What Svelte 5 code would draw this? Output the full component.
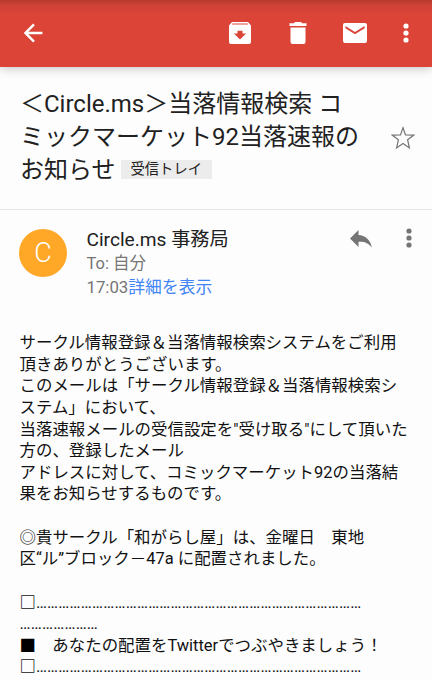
<script lang="ts">
	const subject = ["＜Circle.ms＞当落情報検索 コ", "ミックマーケット92当落速報の", "お知らせ"];

	const sender = {
		initial: "C",
		name: "Circle.ms 事務局",
		to: "To: 自分",
		time: "17:03"
	};

	const rule = "…".repeat(29);

	// already wrapped to the width of the message pane
	const lines = [
		"サークル情報登録＆当落情報検索システムをご利用",
		"頂きありがとうございます。",
		"このメールは「サークル情報登録＆当落情報検索シ",
		"ステム」において、",
		"当落速報メールの受信設定を\"受け取る\"にして頂いた",
		"方の、登録したメール",
		"アドレスに対して、コミックマーケット92の当落結",
		"果をお知らせするものです。",
		"",
		"◎貴サークル「和がらし屋」は、金曜日　東地",
		"区“ル”ブロック－47a に配置されました。",
		"",
		"□" + rule,
		"…".repeat(7),
		"■　あなたの配置をTwitterでつぶやきましょう！",
		"□" + rule
	];

	// splits the dotted rules and the box marks from ordinary text
	function split(line: string) {
		return line.match(/…+|[□■]|[^…□■]+/g) ?? [];
	}
</script>

<div class="screen">
	<header>
		<svg class="back" viewBox="0 0 24 24" width="28" height="28"><path d="M19.2 12H5M12 4.6 4.7 12l7.3 7.4" /></svg>
		<div class="actions">
			<svg viewBox="0 0 22 22" width="22" height="22">
				<path fill-rule="evenodd" d="M3 0h16l3 3.500V20a2 2 0 0 1-2 2H2a2 2 0 0 1-2-2V3.500zM3.300 1.500 2.900 2.500h16.200l-.4-1zM8.500 8.800v2.700H5l6 6 6-6h-3.500V8.800z" />
			</svg>
			<svg viewBox="0 0 18 22" width="18" height="22">
				<path d="M1.500 5.500h15V20a2 2 0 0 1-2 2h-11a2 2 0 0 1-2-2zM.5 1.200h4.500L6 0h6l1 1.200h4.500V4H.5z" />
			</svg>
			<svg viewBox="0 0 24 20" width="24" height="20">
				<path fill-rule="evenodd" d="M2 0h20a2 2 0 0 1 2 2v16a2 2 0 0 1-2 2H2a2 2 0 0 1-2-2V2a2 2 0 0 1 2-2zM2.400 3v2.200L12 11.200l9.600-6V3L12 9z" />
			</svg>
			<svg viewBox="0 0 6 20" width="6" height="20">
				<circle cx="3" cy="3" r="2.600" /><circle cx="3" cy="10" r="2.600" /><circle cx="3" cy="17" r="2.600" />
			</svg>
		</div>
	</header>

	<section class="subject">
		<h1>
			{#each subject as part, i}
				<span class="row">{part}{#if i === subject.length - 1}<span class="label">受信トレイ</span>{/if}</span>
			{/each}
		</h1>
		<svg class="star" viewBox="0 0 24 24" width="24" height="24">
			<path d="M12 1.800l2.500 7.100 8.300.2-6.200 4.600 1.800 8.300-6.400-4.500L5.600 22l1.800-8.300-6.200-4.600 8.300-.2z" />
		</svg>
	</section>

	<section class="sender">
		<div class="avatar">{sender.initial}</div>
		<div class="who">
			<div class="name">{sender.name}</div>
			<div class="meta">{sender.to}</div>
			<div class="meta time">{sender.time}<a href="#details">詳細を表示</a></div>
		</div>
		<svg class="reply" viewBox="0 0 22 18" width="22" height="18">
			<path d="M8.500 0v5C15 5.500 20.500 9.500 21.800 17.500 18 12.500 14 11.500 8.500 11.700V17L0 8.500z" />
		</svg>
		<svg class="more" viewBox="0 0 6 20" width="6" height="20">
			<circle cx="3" cy="3" r="2.600" /><circle cx="3" cy="10" r="2.600" /><circle cx="3" cy="17" r="2.600" />
		</svg>
	</section>

	<article>
		{#each lines as line}
			<p>
				{#each split(line) as part}<span class:dots={part[0] === "…"} class:box={part === "□" || part === "■"} class:filled={part === "■"}>{part}</span>{/each}
			</p>
		{/each}
	</article>
</div>

<style>
	:global(body) {
		overflow: hidden;
		background: #fff;
	}

	.screen {
		width: 432px;
		height: 680px;
		overflow: hidden;
		background: #fdfdfd;
		font-family: Roboto, "Noto Sans CJK JP", sans-serif;
		color: #212121;
	}

	svg {
		display: block;
		flex: none;
	}

	header {
		display: flex;
		align-items: center;
		justify-content: space-between;
		box-sizing: border-box;
		height: 67px;
		padding: 0 23.500px 1px 19.500px;
		background: linear-gradient(#b93a2f, #d04236 6px, #db4437 14px);
		box-shadow: 0 1px 10px rgba(0, 0, 0, 0.25);
	}

	header svg {
		fill: #fff;
	}

	header .back {
		fill: none;
		stroke: #fff;
		stroke-width: 2.1;
	}

	.actions {
		display: flex;
		align-items: center;
	}

	.actions svg {
		margin-left: 37.500px;
	}

	.actions svg:nth-child(3) {
		margin-left: 36.500px;
	}

	.actions svg:nth-child(4) {
		margin-left: 35.500px;
	}

	.subject {
		display: flex;
		align-items: center;
		justify-content: space-between;
		box-sizing: border-box;
		height: 143px;
		padding: 0 17px 0 20px;
		border-bottom: 1px solid #e6e6e6;
	}

	h1 {
		margin: -7px 0 0;
		font-size: 24px;
		font-weight: 400;
	}

	.row {
		display: flex;
		align-items: center;
		height: 32.700px;
		white-space: pre;
	}

	.label {
		height: 19px;
		margin: 4px 0 0 5px;
		padding: 0 10px;
		background: #ececec;
		font-size: 14.300px;
		line-height: 18px;
	}

	.star {
		fill: none;
		stroke: #757575;
		stroke-width: 1.2;
	}

	.sender {
		display: flex;
		align-items: flex-start;
		height: 122px;
		box-sizing: border-box;
		padding: 18px 20.500px 0 19px;
	}

	.avatar {
		width: 48px;
		height: 48px;
		margin-top: 1px;
		border-radius: 50%;
		background: #ffa726;
		color: #fff;
		font-size: 27px;
		font-weight: 300;
		line-height: 48px;
		text-align: center;
	}

	.who {
		flex: 1;
		margin-left: 19.500px;
		white-space: nowrap;
	}

	.name {
		font-size: 19.150px;
		line-height: 24px;
	}

	.meta {
		color: #757575;
		font-size: 16.500px;
		line-height: 24px;
	}

	.time {
		font-size: 16.800px;
		line-height: 23px;
	}

	a {
		color: #4285f4;
		text-decoration: none;
	}

	.sender svg {
		fill: #757575;
	}

	.reply {
		margin-top: 2px;
	}

	.more {
		margin: 0 0 0 34px;
	}

	article {
		padding-left: 19.500px;
		color: #111;
		font-size: 16.450px;
	}

	p {
		height: 21.640px;
		margin: 0;
		line-height: 21.640px;
		white-space: nowrap;
	}

	.dots {
		letter-spacing: 0.230px;
	}

	.box {
		display: inline-block;
		width: 16.400px;
		font-weight: 700;
	}

	.filled {
		color: #000;
	}
</style>
